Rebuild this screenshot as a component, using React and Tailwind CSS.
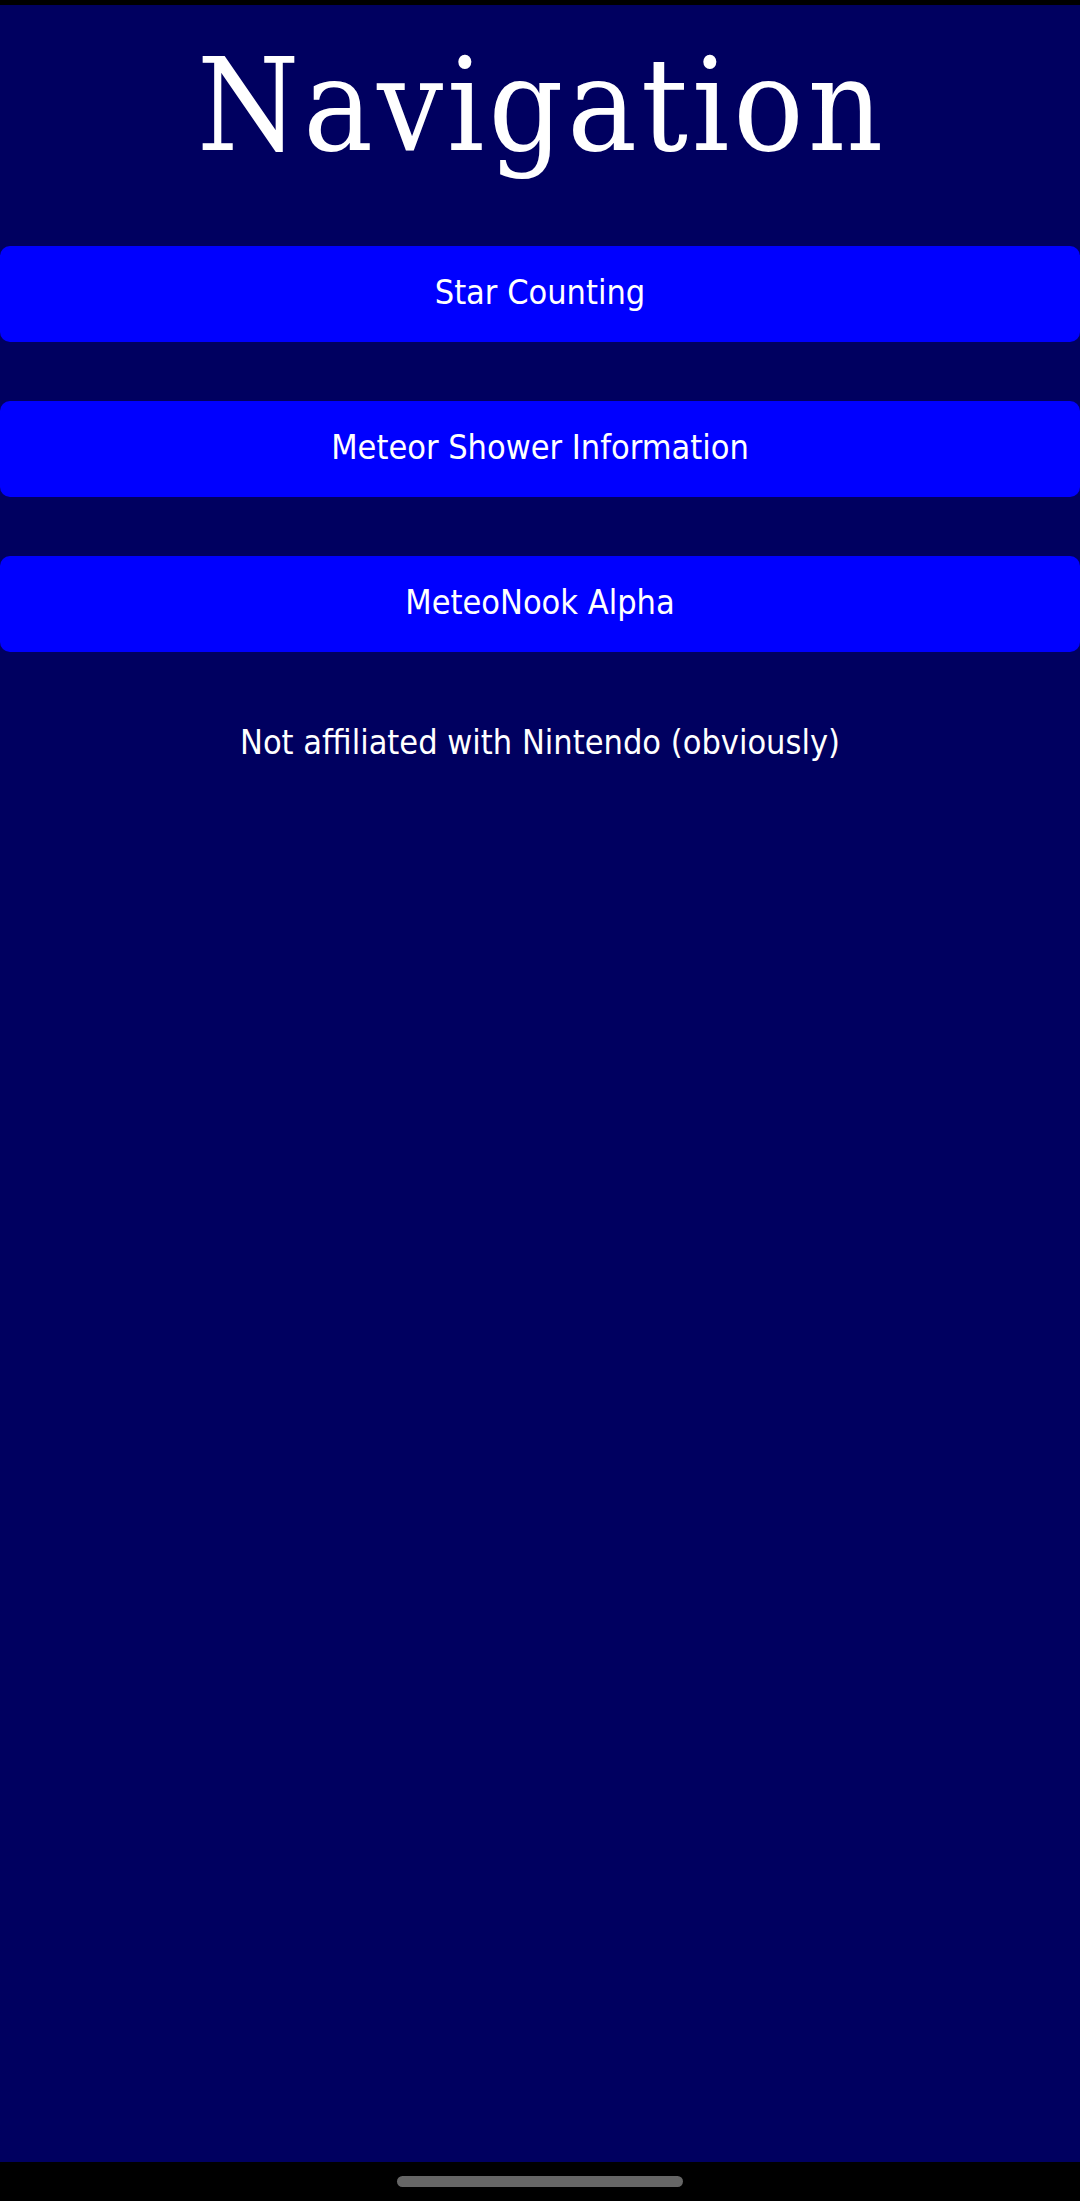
import React from "react";

const links = ["Star Counting", "Meteor Shower Information", "MeteoNook Alpha"];

const App = () => {
  return (
    <div className="min-h-[2201px] flex flex-col bg-black">
      <div className="h-[5px]" />
      <main className="flex-1 flex flex-col bg-[#000060]">
        <h1 className="pt-[35px] pl-[4px] text-center text-white text-[130px] leading-none tracking-[4px] font-['DejaVu_Serif_Condensed',serif]">
          Navigation
        </h1>
        <nav className="mt-[76px] flex flex-col gap-[59px]">
          {links.map((label) => (
            <button
              key={label}
              className="h-[96px] w-full flex items-center justify-center pb-[5px] rounded-[10px] bg-[#0000ff] text-white text-[34px] leading-[40px] font-['DejaVu_Sans_Condensed',sans-serif]"
            >
              {label}
            </button>
          ))}
        </nav>
        <p className="mt-[70px] text-center text-white text-[34px] leading-[40px] font-['DejaVu_Sans_Condensed',sans-serif]">
          Not affiliated with Nintendo (obviously)
        </p>
      </main>
      <div className="h-[39px] flex items-center justify-center">
        <div className="w-[286px] h-[11px] rounded-full bg-[#666666]" />
      </div>
    </div>
  );
};

export default App;
